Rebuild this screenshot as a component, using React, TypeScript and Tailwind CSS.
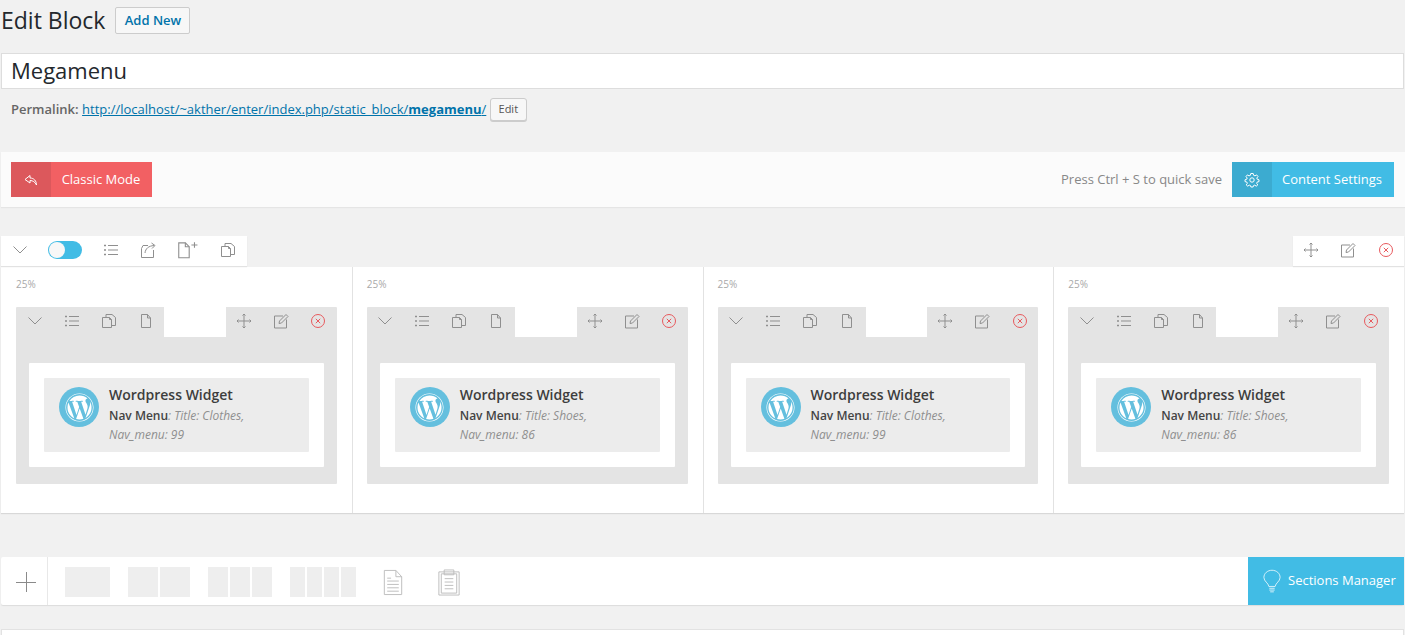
import type { ReactNode } from "react";
import { FaWordpress } from "react-icons/fa";

function Icon({ children, size = 20, className = "text-[#8f8f8f]" }: { children: ReactNode; size?: number; className?: string }) {
  return (
    <svg width={size} height={size} viewBox="0 0 20 20" fill="none" stroke="currentColor" strokeWidth="1" className={className}>
      {children}
    </svg>
  );
}

const Chevron = () => (
  <Icon>
    <path d="M3.5 6.5 L10 13 L16.5 6.5" />
  </Icon>
);

const ListIcon = () => (
  <Icon>
    <path d="M7 5.5H17M7 10H17M7 14.5H17" />
    <path d="M3 5.5H5M3 10H5M3 14.5H5" strokeWidth="1.4" />
  </Icon>
);

const ShareIcon = () => (
  <Icon>
    <path d="M10 5.5H5L3.5 8.5V17.5H15.5V10" />
    <path d="M7 13C7.5 8.5 10.5 6 16 5.5" />
    <path d="M13.5 3L17 5.5L14 8.5" />
  </Icon>
);

const FileIcon = () => (
  <Icon>
    <path d="M5.5 3.5H11.5L14.5 7V16.5H5.5Z" />
    <path d="M11.5 3.5V7H14.5" />
  </Icon>
);

const FilePlus = () => (
  <Icon size={22}>
    <path d="M2.5 3.5H8.5L12 7V17H2.5Z" />
    <path d="M8.5 3.5V7H12" />
    <path d="M14 5.5H19.5M16.8 3V8" />
  </Icon>
);

const CopyIcon = () => (
  <Icon>
    <path d="M3.5 6.5H10.5L12.5 8.5V16.5H3.5Z" />
    <path d="M7 6.5V3.5H13L16.5 6.5V14.5H12.5" />
    <path d="M10.5 6.5V8.5H12.5" />
  </Icon>
);

const MoveIcon = () => (
  <Icon>
    <path d="M10 3V17M3 10H17" />
    <path d="M8.5 4.5L10 3L11.5 4.5M8.5 15.5L10 17L11.5 15.5M4.5 8.5L3 10L4.5 11.5M15.5 8.5L17 10L15.5 11.5" />
  </Icon>
);

const EditIcon = () => (
  <Icon>
    <path d="M12 5H3.5V17H15.5V8.5" />
    <path d="M8 12.5L8.5 10L15 3.5L17 5.5L10.5 12Z" />
  </Icon>
);

const CloseIcon = () => (
  <Icon className="text-[#e8595d]">
    <circle cx="10" cy="10" r="6.5" />
    <path d="M7.8 7.8L12.2 12.2M12.2 7.8L7.8 12.2" />
  </Icon>
);

function Cell({ children, className = "w-[37px]" }: { children: ReactNode; className?: string }) {
  return <div className={`flex h-full shrink-0 items-center justify-center pb-[2px] ${className}`}>{children}</div>;
}

function RowActions() {
  return (
    <div className="flex h-full">
      <Cell className="w-[37px] pr-[1px]"><MoveIcon /></Cell>
      <Cell className="w-[37px] pr-[1px]"><EditIcon /></Cell>
      <Cell className="w-[37px]"><CloseIcon /></Cell>
    </div>
  );
}

const columns = [
  { title: "Clothes", num: 99 },
  { title: "Shoes", num: 86 },
  { title: "Clothes", num: 99 },
  { title: "Shoes", num: 86 },
];

function Column({ title, num, first }: { title: string; num: number; first: boolean }) {
  return (
    <div className={`h-full pr-[15px] pt-[10px] ${first ? "pl-[15px]" : "border-l border-[#e2e2e2] pl-[14px]"}`}>
      <div className="h-[30px] text-[10px] leading-[14px] text-[#a9a9a9]">25%</div>
      <div className="h-[177px] rounded-[1px] bg-[#e4e4e4]">
        <div className="flex h-[30px] justify-between">
          <div className="flex">
            <Cell><Chevron /></Cell>
            <Cell><ListIcon /></Cell>
            <Cell><CopyIcon /></Cell>
            <Cell><FileIcon /></Cell>
          </div>
          <div className="flex-1 bg-white" />
          <RowActions />
        </div>
        <div className="mx-[13px] mt-[26px] h-[104px] rounded-[1px] bg-white p-[15px]">
          <div className="flex h-[74px] rounded-[1px] bg-[#ececec] pl-[15px] pt-[9px]">
            <div className="flex h-[40px] w-[40px] shrink-0 items-center justify-center rounded-full bg-[#64bfde] text-white">
              <FaWordpress size={29} />
            </div>
            <div className="ml-[10px] -mt-px w-[170px]">
              <div className="text-[14px] font-semibold leading-[18px] text-[#3d3d3d]">Wordpress Widget</div>
              <div className="mt-[2px] text-[12px] leading-[19px] text-[#8f8f8f]">
                <div>
                  <span className="font-semibold text-[#444]">Nav Menu</span>
                  <i>: Title: {title},</i>
                </div>
                <i className="block">Nav_menu: {num}</i>
              </div>
            </div>
          </div>
        </div>
      </div>
    </div>
  );
}

export default function App() {
  return (
    <div className="h-[635px] w-[1405px] overflow-hidden bg-[#f1f1f1] font-['Open_Sans',sans-serif]">
      <div className="flex items-center pl-[1px] pt-[7px]">
        <h1 className="text-[23px] leading-[27px] text-[#23282d]">Edit Block</h1>
        <button className="ml-[10px] h-[27px] w-[75px] rounded-[2px] border border-[#ccc] bg-[#f7f7f7] text-[13px] font-semibold leading-[25px] text-[#0073aa]">
          Add New
        </button>
      </div>

      <div className="ml-[1px] mt-[19px] flex h-[36px] w-[1403px] items-center border border-[#ddd] bg-white pb-[2px] pl-[9px] text-[22px] text-[#23282d]">
        Megamenu
      </div>

      <div className="mt-[9px] flex h-[23px] items-center pl-[11px] text-[13px] text-[#666]">
        <b className="font-semibold">Permalink:</b>
        <a className="ml-[3.5px] text-[#0073aa] underline">
          http://localhost/~akther/enter/index.php/static_block/<b>megamenu</b>/
        </a>
        <button className="ml-[3.5px] h-[23px] w-[37px] rounded-[3px] border border-[#ccc] bg-[#f7f7f7] text-[11px] text-[#555] shadow-[0_1px_0_#ccc]">
          Edit
        </button>
      </div>

      <div className="ml-[1px] mt-[31px] flex h-[55px] items-center justify-between bg-[#fbfbfb] pl-[10px] pr-[11px] shadow-[0_1px_1px_#e5e5e5]">
        <button className="flex h-[35px] w-[141px] bg-[#f26063] text-[13px] text-white">
          <span className="flex h-full w-[40px] items-center justify-center bg-[#dc585c]">
            <svg width="16" height="16" viewBox="0 0 16 16" fill="none" stroke="currentColor" strokeWidth="1">
              <path d="M7 3.5L2 7.5L7 11V8.5C10 8.5 12 10 13.5 13C13.5 9 11 6 7 6Z" />
            </svg>
          </span>
          <span className="flex h-full flex-1 items-center justify-center pr-[1px] font-medium">Classic Mode</span>
        </button>
        <div className="flex items-center">
          <span className="mr-[10px] mt-px text-[13px] text-[#888]">Press Ctrl + S to quick save</span>
          <button className="flex h-[35px] w-[162px] bg-[#41bce5] text-[13px] text-white">
            <span className="flex h-full w-[40px] items-center justify-center bg-[#3cabd0]">
              <svg width="16" height="16" viewBox="0 0 16 16" fill="none" stroke="currentColor" strokeWidth="1">
                <circle cx="8" cy="8" r="2.2" />
                <path d="M6.8 1.5H9.2L9.6 3.3L11 3.9L12.6 2.9L14 4.6L12.8 6L13.2 7.2L15 7.8V9.6L13.2 10L12.7 11.4L13.8 12.9L12.2 14.2L10.8 13.1L9.5 13.6L9.1 15H6.9L6.5 13.6L5.2 13.1L3.8 14.2L2.2 12.9L3.3 11.4L2.8 10L1 9.6V7.8L2.8 7.2L3.2 6L2 4.6L3.4 2.9L5 3.9L6.4 3.3Z" />
              </svg>
            </span>
            <span className="flex h-full flex-1 items-center justify-center pr-[2px] font-medium">Content Settings</span>
          </button>
        </div>
      </div>

      <div className="ml-[1px] mt-[29px] flex h-[30px] w-[1403px] justify-between">
        <div className="flex w-[246px] bg-white shadow-[0_1px_1px_#e2e2e2]">
          <Cell><Chevron /></Cell>
          <Cell className="w-[54px]">
            <span className="flex h-[18px] w-[34px] items-center justify-start rounded-full bg-[#41bce5] pl-[1px]">
              <span className="h-[16px] w-[16px] rounded-full bg-[#f7f7f7]" />
            </span>
          </Cell>
          <Cell><ListIcon /></Cell>
          <Cell><ShareIcon /></Cell>
          <Cell className="w-[41px]"><FilePlus /></Cell>
          <Cell className="w-[41px]"><CopyIcon /></Cell>
        </div>
        <div className="w-[111px] bg-white shadow-[0_1px_1px_#e2e2e2]">
          <RowActions />
        </div>
      </div>

      <div className="ml-[1px] mt-px grid h-[246px] w-[1403px] grid-cols-4 bg-white shadow-[0_1px_1px_#d8d8d8]">
        {columns.map((c, i) => (
          <Column key={i} title={c.title} num={c.num} first={i === 0} />
        ))}
      </div>

      <div className="ml-[1px] mt-[44px] flex h-[48px] w-[1403px] items-center rounded-[2px] bg-white shadow-[0_1px_1px_#dcdcdc]">
        <div className="flex h-full w-[47px] items-center justify-center border-r border-[#e8e8e8] pl-[3px] pt-[2px]">
          <svg width="20" height="20" viewBox="0 0 20 20" stroke="#8a8a8a" strokeWidth="1">
            <path d="M0 10.5H20M10.5 0V20" />
          </svg>
        </div>
        <div className="ml-[17px] mt-[2px] flex h-[30px] items-center">
          <div className="h-full w-[45px] bg-[#eee]" />
          <div className="ml-[18px] flex h-full gap-[2px]">
            <div className="w-[30px] bg-[#eee]" />
            <div className="w-[30px] bg-[#eee]" />
          </div>
          <div className="ml-[18px] flex h-full gap-[2px]">
            <div className="w-[20px] bg-[#eee]" />
            <div className="w-[20px] bg-[#eee]" />
            <div className="w-[20px] bg-[#eee]" />
          </div>
          <div className="ml-[18px] flex h-full gap-[2px]">
            <div className="w-[15px] bg-[#eee]" />
            <div className="w-[15px] bg-[#eee]" />
            <div className="w-[15px] bg-[#eee]" />
            <div className="w-[15px] bg-[#eee]" />
          </div>
          <svg className="ml-[27px]" width="20" height="27" viewBox="0 0 20 28" fill="none" stroke="#bdbdbd" strokeWidth="1">
            <path d="M1 1.5H13L19 8V26.5H1Z" />
            <path d="M13 1.5V8H19" />
            <path d="M4 9.5H8M4 12.5H16M4 16H16M4 19.5H16M4 23H16" />
          </svg>
          <svg className="ml-[34px]" width="24" height="27" viewBox="0 0 24 28" fill="none" stroke="#bdbdbd" strokeWidth="1">
            <path d="M1.5 3H22.5V27H1.5Z" />
            <path d="M4 5H20V25H4Z" />
            <path d="M7 1H17V6H7Z" />
            <path d="M7.5 10H16.5M7.5 13.5H16.5M7.5 17H16.5M7.5 20.5H16.5" />
          </svg>
        </div>
        <div className="ml-auto flex h-full w-[156px] items-center bg-[#41bce5] pl-[15px] text-[13px] font-medium text-white">
          <svg width="18" height="27" viewBox="0 0 20 27" fill="none" stroke="currentColor" strokeWidth="1" strokeOpacity="0.85">
            <path d="M6.5 19C6 15 1 13.5 1 9C1 4.5 5 1 10 1C15 1 19 4.5 19 9C19 13.5 14 15 13.5 19Z" />
            <path d="M7 21H13M7 23H13M8 25H12" />
          </svg>
          <span className="ml-[7px]">Sections Manager</span>
        </div>
      </div>

      <div className="ml-[1px] mt-[24px] h-[20px] w-[1403px] border border-[#e2e2e2] bg-white" />
    </div>
  );
}
